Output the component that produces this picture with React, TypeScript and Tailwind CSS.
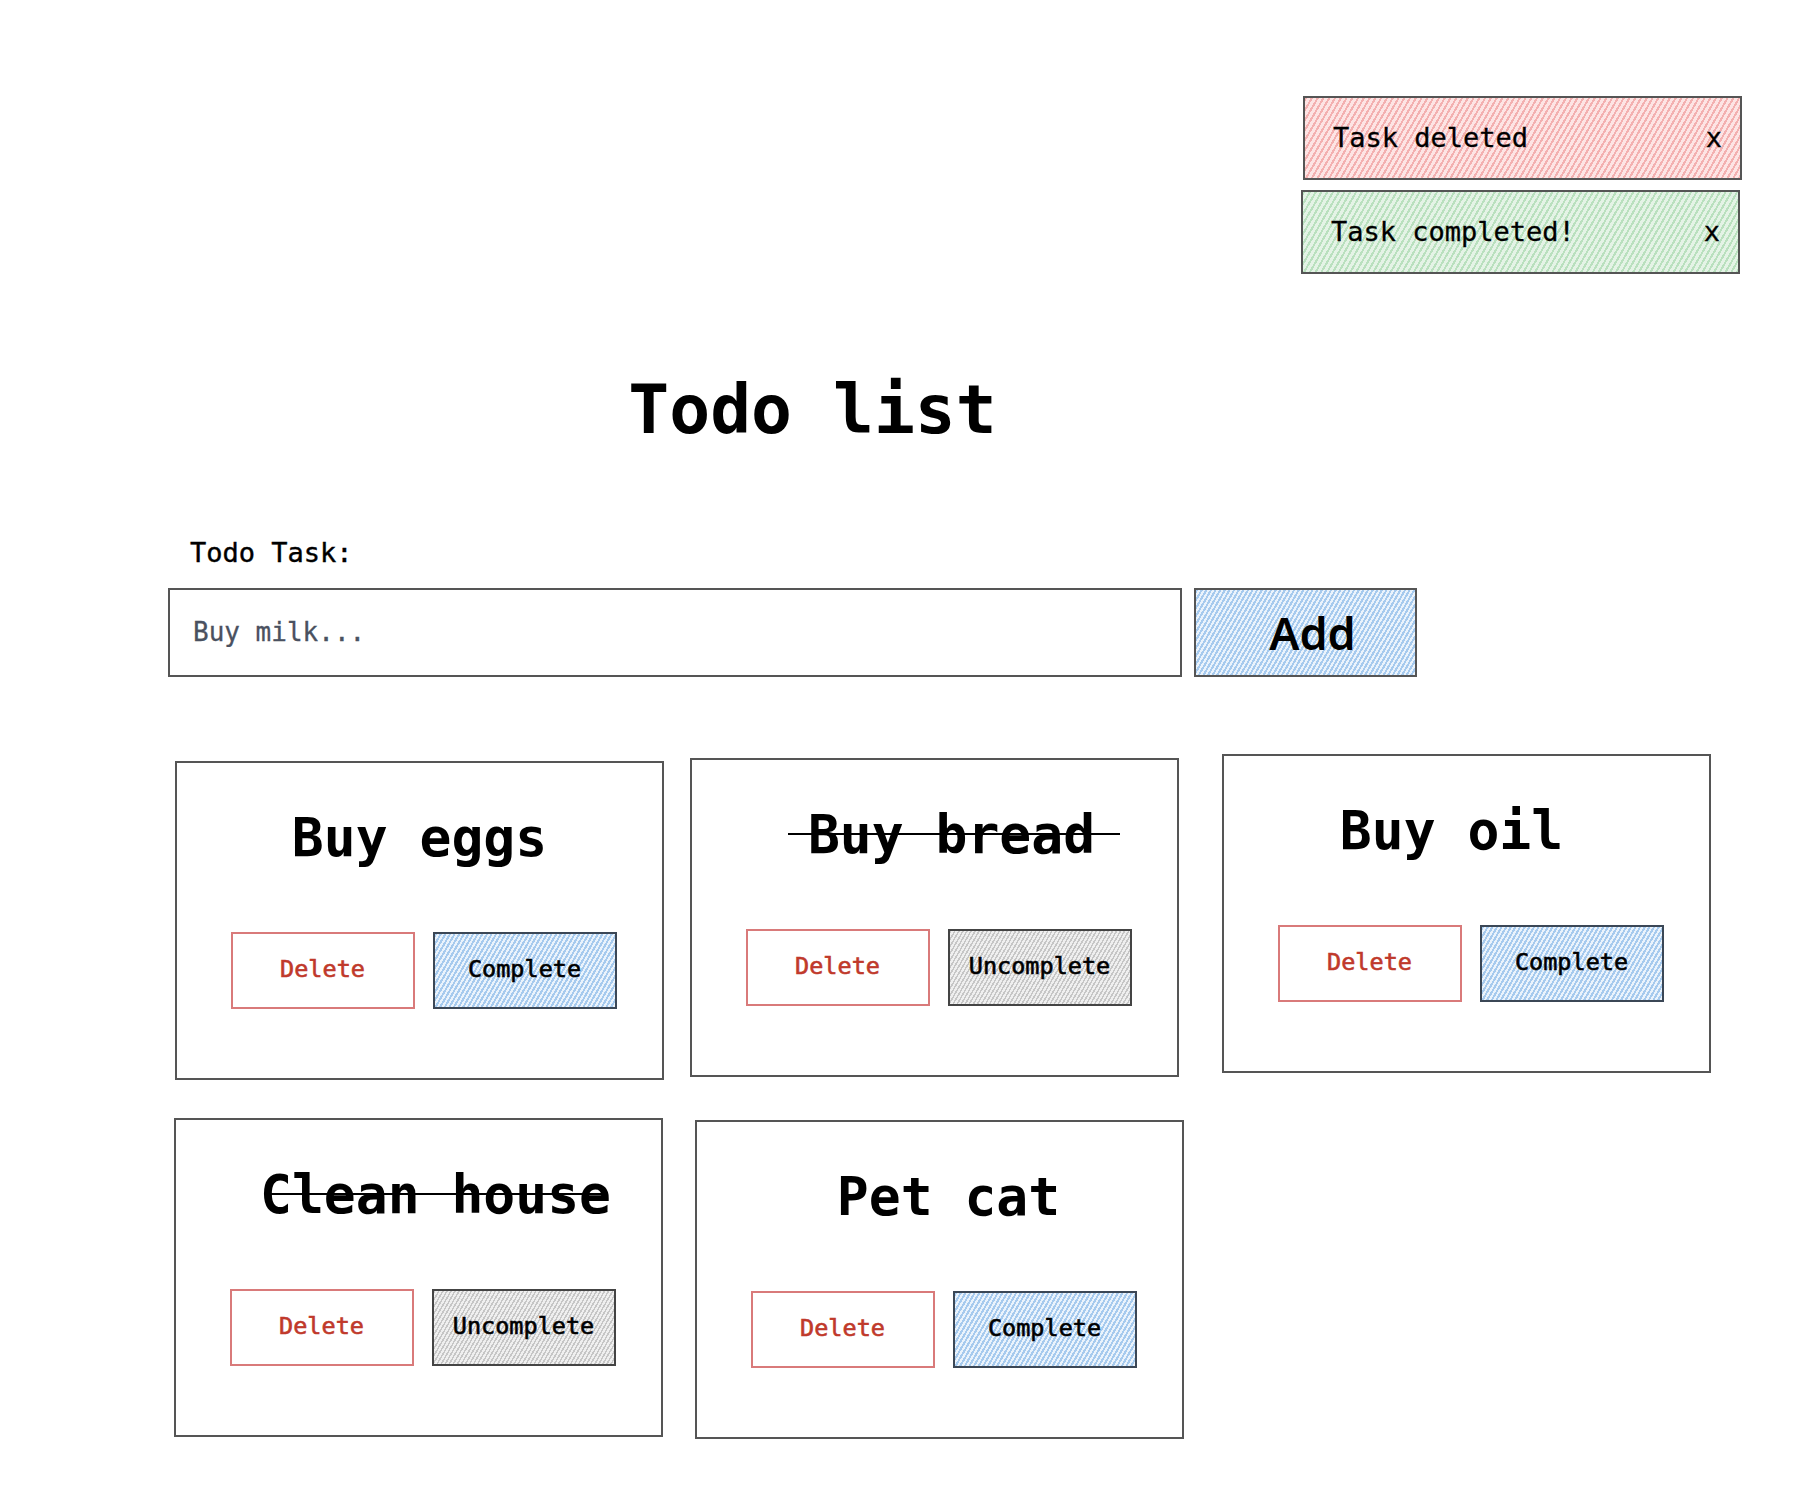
import React from "react";

type Task = {
  id: number;
  title: string;
  done: boolean;
  titleClass: string;
  strikeClass: string;
  cardClass: string;
};

const tasks: Task[] = [
  { id: 1, title: "Buy eggs", done: false, titleClass: "", strikeClass: "", cardClass: "mt-[7px]" },
  {
    id: 2,
    title: "Buy bread",
    done: true,
    titleClass: "pl-[34px]",
    strikeClass: "left-[-20px] right-[-25px]",
    cardClass: "mt-[4px]",
  },
  { id: 3, title: "Buy oil", done: false, titleClass: "pr-[30px]", strikeClass: "", cardClass: "mt-0 ml-[17px]" },
  {
    id: 4,
    title: "Clean house",
    done: true,
    titleClass: "pl-[34px]",
    strikeClass: "left-[10px] right-[5px]",
    cardClass: "mt-0 ml-[-1px]",
  },
  { id: 5, title: "Pet cat", done: false, titleClass: "pl-[18px]", strikeClass: "", cardClass: "mt-[2px] ml-[5px]" },
];

const Toast = ({ text, tone, className }: { text: string; tone: "red" | "green"; className: string }) => {
  const fill =
    tone === "red"
      ? "bg-[image:repeating-linear-gradient(120deg,#f3b0b0_0px_2px,#fde4e4_2px_5px)]"
      : "bg-[image:repeating-linear-gradient(120deg,#b9e0be_0px_2px,#e4f3e6_2px_5px)]";

  return (
    <div
      className={`flex h-[84px] w-[439px] items-center justify-between border-2 border-[#555] pl-[28px] pr-[18px] text-[27px] [-webkit-text-stroke:0.3px_black] ${fill} ${className}`}
    >
      <span>{text}</span>
      <button className="text-[27px]">x</button>
    </div>
  );
};

const TaskCard = ({ task }: { task: Task }) => {
  return (
    <div
      className={`box-border flex h-[319px] w-[489px] flex-col items-center border-2 border-[#555] pt-[43px] ${task.cardClass}`}
    >
      <h2 className={`w-full text-center text-[53px] font-bold leading-[1.2] ${task.titleClass}`}>
        <span className="relative inline-block">
          {task.title}
          {task.done && <span className={`absolute top-[30px] h-[2.5px] bg-black ${task.strikeClass}`} />}
        </span>
      </h2>
      <div className="mt-[62px] flex gap-[18px] pl-[8px]">
        <button className="h-[77px] w-[184px] border-2 border-[#d97a7a] bg-white text-[23.5px] text-[#c0392b] [-webkit-text-stroke:0.6px_#c0392b]">
          Delete
        </button>
        {task.done ? (
          <button className="h-[77px] w-[184px] border-2 border-[#444] bg-[image:repeating-linear-gradient(120deg,#c6c6c6_0px_1.5px,#efefef_1.5px_3.5px)] text-[23.5px] [-webkit-text-stroke:0.6px_black]">
            Uncomplete
          </button>
        ) : (
          <button className="h-[77px] w-[184px] border-2 border-[#3b4756] bg-[image:repeating-linear-gradient(120deg,#a6caee_0px_2px,#eaf3fc_2px_4px)] text-[23.5px] [-webkit-text-stroke:0.6px_black]">
            Complete
          </button>
        )}
      </div>
    </div>
  );
};

const App = () => {
  return (
    <div className="relative min-h-screen w-full bg-white font-['DejaVu_Sans_Mono',monospace] text-black">
      <div className="absolute right-[66px] top-[96px] flex flex-col items-end gap-[10px]">
        <Toast text="Task deleted" tone="red" className="" />
        <Toast text="Task completed!" tone="green" className="mr-[2px]" />
      </div>

      <div className="pl-[168px] pt-[369px] pb-[56px]">
        <h1 className="w-[1249px] pl-[40px] text-center text-[68px] font-bold leading-[1.2]">Todo list</h1>

        <label
          htmlFor="task"
          className="mt-[86px] block pl-[22px] text-[27px] leading-[1.2] [-webkit-text-stroke:0.4px_black]"
        >
          Todo Task:
        </label>
        <div className="mt-[19px] flex gap-[12px]">
          <input
            id="task"
            placeholder="Buy milk..."
            className="box-border h-[89px] w-[1014px] border-2 border-[#555] px-[23px] text-[26px] outline-none placeholder:text-[#4a5160] [-webkit-text-stroke:0.3px_#4a5160]"
          />
          <button className="box-border h-[89px] w-[223px] border-2 border-[#555] bg-[image:repeating-linear-gradient(120deg,#a6caee_0px_2px,#eaf3fc_2px_4px)] pl-[14px] font-['Noto_Sans',sans-serif] text-[45px] font-semibold">
            Add
          </button>
        </div>

        <div className="ml-[7px] mt-[77px] grid grid-cols-[repeat(3,489px)] items-start gap-x-[26px] gap-y-[38px]">
          {tasks.map((task) => (
            <TaskCard key={task.id} task={task} />
          ))}
        </div>
      </div>
    </div>
  );
};

export default App;
